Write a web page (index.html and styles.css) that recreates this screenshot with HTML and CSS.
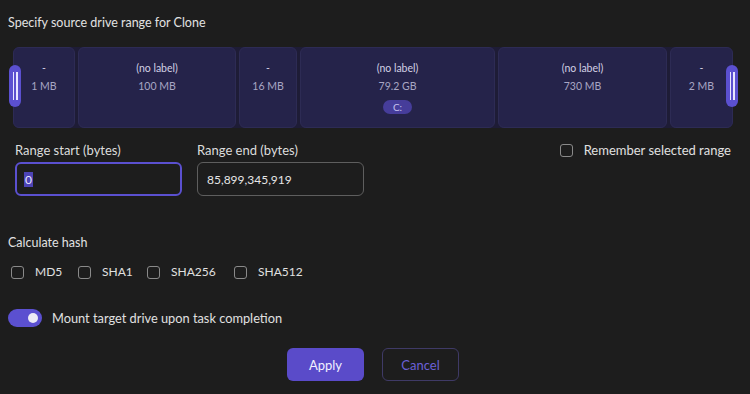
FILE: index.html
```html
<!DOCTYPE html>
<html>
<head>
<meta charset="utf-8">
<link rel="stylesheet" href="styles.css">
</head>
<body>
<div class="page">
  <div class="title">Specify source drive range for Clone</div>

  <div class="drive">
    <div class="segments">
      <div class="seg" style="width:62px"><div class="lbl">-</div><div class="size">1 MB</div></div>
      <div class="seg" style="width:158px"><div class="lbl">(no label)</div><div class="size">100 MB</div></div>
      <div class="seg" style="width:58px"><div class="lbl">-</div><div class="size">16 MB</div></div>
      <div class="seg" style="width:195px"><div class="lbl">(no label)</div><div class="size">79.2 GB</div><div class="badge">C:</div></div>
      <div class="seg" style="width:169px"><div class="lbl">(no label)</div><div class="size">730 MB</div></div>
      <div class="seg seg-last"><div class="lbl">-</div><div class="size">2 MB</div></div>
    </div>
    <div class="handle handle-left"><span></span><span></span></div>
    <div class="handle handle-right"><span></span><span></span></div>
  </div>

  <div class="ranges">
    <div class="field">
      <div class="field-label">Range start (bytes)</div>
      <div class="input input-active"><span class="sel">0</span></div>
    </div>
    <div class="field">
      <div class="field-label">Range end (bytes)</div>
      <div class="input">85,899,345,919</div>
    </div>
    <label class="check remember"><span class="box"></span>Remember selected range</label>
  </div>

  <div class="section-label">Calculate hash</div>
  <div class="hashes">
    <label class="check hash-md5"><span class="box"></span>MD5</label>
    <label class="check hash-sha1"><span class="box"></span>SHA1</label>
    <label class="check hash-sha256"><span class="box"></span>SHA256</label>
    <label class="check"><span class="box"></span>SHA512</label>
  </div>

  <div class="toggle-row">
    <span class="toggle"><span class="knob"></span></span>
    <span>Mount target drive upon task completion</span>
  </div>

  <div class="buttons">
    <button class="btn btn-primary">Apply</button>
    <button class="btn btn-secondary">Cancel</button>
  </div>
</div>
</body>
</html>
```

FILE: styles.css
```css
* { box-sizing: border-box; }
html, body {
  margin: 0;
  padding: 0;
  background: #1d1d1d;
  width: 750px;
  height: 394px;
  overflow: hidden;
}
body {
  font-family: "Lato", "Inter", sans-serif;
  color: #e2e2e2;
}
.page {
  padding: 15px 0 0 8px;
}
.title {
  font-size: 12.5px;
  line-height: 16px;
  height: 16px;
}
.drive {
  position: relative;
  margin: 16px 0 0 5px;
  width: 720px;
  height: 81px;
  background: #1e1c36;
  border-radius: 6px;
}
.segments {
  display: flex;
  gap: 3px;
  height: 100%;
}
.seg {
  background: #25234a;
  border: 1px solid #2d2b54;
  border-radius: 6px;
  display: flex;
  flex-direction: column;
  align-items: center;
  padding-top: 13px;
  font-size: 10.5px;
  line-height: 14px;
}
.seg-last { flex: 1; }
.lbl { color: #d2d0e4; height: 16px; }
.size { color: #a8a6c4; height: 16px; margin-top: 2px; }
.badge {
  margin-top: 5px;
  background: #463d9a;
  color: #c6c2ee;
  font-size: 10px;
  line-height: 14px;
  padding: 0 10px;
  border-radius: 7px;
}
.handle {
  position: absolute;
  top: 18px;
  width: 12px;
  height: 42px;
  background: #5b50d0;
  border-radius: 6px;
  display: flex;
  justify-content: center;
  align-items: center;
  gap: 2px;
}
.handle span {
  width: 1.5px;
  height: 28px;
  background: #e8e6ff;
}
.handle-left { left: -4px; }
.handle-right { right: -5px; }

.ranges {
  display: flex;
  margin-top: 14px;
  padding-left: 7px;
}
.field { width: 167px; margin-right: 15px; }
.field-label {
  font-size: 13px;
  line-height: 16px;
  color: #dcdcdc;
}
.input {
  margin-top: 4px;
  height: 34px;
  border: 1px solid #5e5e5e;
  border-radius: 6px;
  padding: 0 9px;
  display: flex;
  align-items: center;
  font-size: 12px;
  color: #e6e6e6;
}
.input-active {
  border: 2px solid #5b50d0;
  padding-left: 7px;
}
.sel {
  background: #4d44b5;
  color: #e8e6ff;
  padding: 0 1px;
  line-height: 15px;
}
.check {
  display: flex;
  align-items: center;
  font-size: 13px;
  line-height: 16px;
  color: #e0e0e0;
}
.box {
  width: 13px;
  height: 13px;
  border: 1.5px solid #8a8a8a;
  border-radius: 3px;
  margin-right: 11px;
}
.remember {
  margin-left: auto;
  margin-right: 19px;
  align-self: flex-start;
}
.section-label {
  margin-top: 39px;
  font-size: 12.5px;
  line-height: 16px;
}
.hashes {
  display: flex;
  margin-top: 13px;
  padding-left: 3px;
}
.hashes .check { font-size: 12px; }
.hash-md5 { width: 67px; }
.hash-sha1 { width: 69px; }
.hash-sha256 { width: 87px; }
.toggle-row {
  display: flex;
  align-items: center;
  margin-top: 29px;
  font-size: 12.8px;
  color: #e0e0e0;
}
.toggle {
  width: 34px;
  height: 18px;
  border-radius: 9px;
  background: #5b50d0;
  position: relative;
  margin-right: 10px;
}
.knob {
  position: absolute;
  right: 4px;
  top: 4px;
  width: 10px;
  height: 10px;
  border-radius: 50%;
  background: #ecebf6;
}
.buttons {
  display: flex;
  justify-content: center;
  gap: 18px;
  margin-top: 21px;
  padding-right: 12px;
}
.btn {
  width: 77px;
  height: 33px;
  border-radius: 6px;
  font-family: inherit;
  font-size: 13px;
}
.btn-primary {
  background: #5a4bc9;
  border: none;
  color: #f1f0ff;
}
.btn-secondary {
  background: transparent;
  border: 1px solid #3f3a66;
  color: #6b60d6;
}
```
